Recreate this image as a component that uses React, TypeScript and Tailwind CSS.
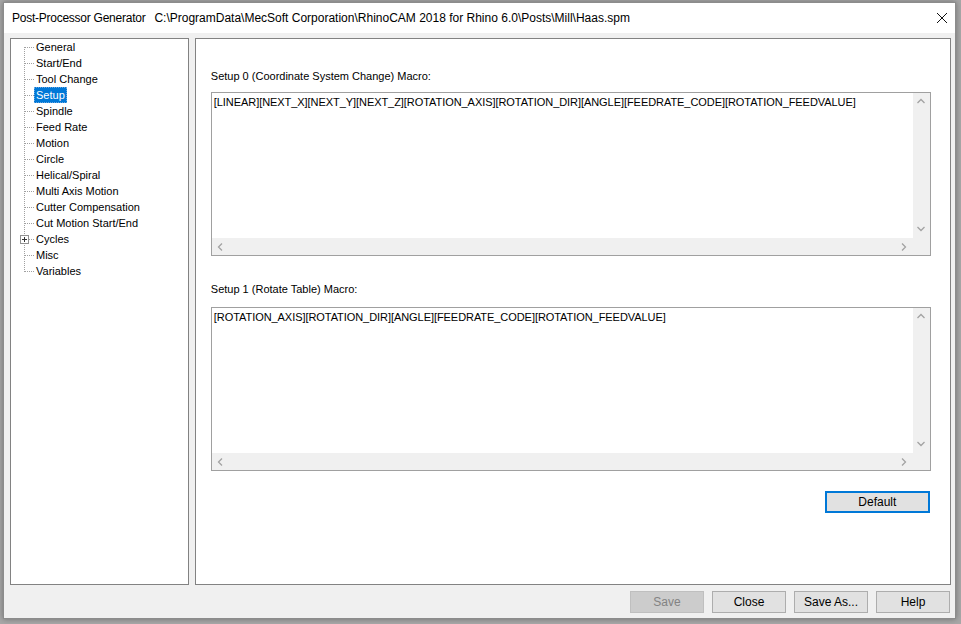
import React from "react";

const items = [
  "General",
  "Start/End",
  "Tool Change",
  "Setup",
  "Spindle",
  "Feed Rate",
  "Motion",
  "Circle",
  "Helical/Spiral",
  "Multi Axis Motion",
  "Cutter Compensation",
  "Cut Motion Start/End",
  "Cycles",
  "Misc",
  "Variables",
];

function TreeLines({ first, last, plus }: { first: boolean; last: boolean; plus: boolean }) {
  return (
    <svg width="23" height="16" viewBox="0 0 23 16" className="shrink-0" shapeRendering="crispEdges">
      <line
        x1="13.5"
        y1={first ? 8 : 0}
        x2="13.5"
        y2={last ? 9 : 16}
        stroke="#a0a0a0"
        strokeWidth="1"
        strokeDasharray="1 1"
      />
      <line x1={plus ? 18 : 14} y1="8.5" x2="23" y2="8.5" stroke="#a0a0a0" strokeWidth="1" strokeDasharray="1 1" />
      {plus && (
        <g>
          <rect x="9.5" y="4.5" width="8" height="8" fill="#ffffff" stroke="#919191" />
          <line x1="11" y1="8.5" x2="16" y2="8.5" stroke="#333" />
          <line x1="13.5" y1="6" x2="13.5" y2="11" stroke="#333" />
        </g>
      )}
    </svg>
  );
}

function Chevron({ dir }: { dir: "up" | "down" | "left" | "right" }) {
  const paths: Record<string, string> = {
    up: "M1.5 6 L5 2.5 L8.5 6",
    down: "M1.5 3 L5 6.5 L8.5 3",
    left: "M6 1.5 L2.5 5 L6 8.5",
    right: "M3 1.5 L6.5 5 L3 8.5",
  };
  return (
    <svg width="10" height="10" viewBox="0 0 10 10">
      <path d={paths[dir]} fill="none" stroke="#a3a3a3" strokeWidth="1.3" />
    </svg>
  );
}

function MacroBox({ text }: { text: string }) {
  return (
    <div className="w-[720px] h-[164px] border border-[#a0a0a0] bg-white flex flex-col">
      <div className="flex flex-1 min-h-0">
        <div className="flex-1 pl-[2px] pt-[3px] text-[11px] leading-[13px] tracking-[-0.06px] text-black whitespace-nowrap overflow-hidden">
          {text}
        </div>
        <div className="w-[17px] bg-[#f0f0f0] flex flex-col justify-between items-center py-[4px]">
          <Chevron dir="up" />
          <Chevron dir="down" />
        </div>
      </div>
      <div className="h-[17px] flex">
        <div className="flex-1 bg-[#f0f0f0] flex items-center justify-between px-[4px]">
          <Chevron dir="left" />
          <Chevron dir="right" />
        </div>
        <div className="w-[17px] bg-[#f0f0f0]" />
      </div>
    </div>
  );
}

function Btn({ label, disabled }: { label: string; disabled?: boolean }) {
  return (
    <div
      className={
        disabled
          ? "w-[74px] h-[22px] flex items-center justify-center border border-[#bfbfbf] bg-[#cccccc] text-[#838383] text-[12px]"
          : "w-[74px] h-[22px] flex items-center justify-center border border-[#adadad] bg-[#e1e1e1] text-black text-[12px]"
      }
    >
      {label}
    </div>
  );
}

export default function App() {
  return (
    <div className="w-[961px] h-[624px] bg-[#a8a8a8] overflow-hidden pt-[2px] pl-[3px] font-['Liberation_Sans',Arial,sans-serif]">
      <div className="w-[953px] h-[617px] border border-[#8c8c8c] bg-[#f0f0f0] flex flex-col shadow-[0_0_6px_rgba(0,0,0,0.35)]">
        {/* Title bar */}
        <div className="h-[30px] bg-white flex items-center pl-[8px] pr-[6px] shrink-0">
          <div className="flex gap-[9px] text-[12px] text-black flex-1">
            <span className="tracking-[-0.25px]">Post-Processor Generator</span>
            <span>C:\ProgramData\MecSoft Corporation\RhinoCAM 2018 for Rhino 6.0\Posts\Mill\Haas.spm</span>
          </div>
          <svg width="12" height="12" viewBox="0 0 12 12" className="mr-[1px] -mt-[1px]">
            <path d="M1 1 L11 11 M11 1 L1 11" stroke="#111" strokeWidth="1" />
          </svg>
        </div>

        {/* Body */}
        <div className="flex gap-[6px] pl-[6px] pr-[4px] pt-[5px] h-[552px] shrink-0">
          {/* Tree */}
          <div className="w-[179px] h-[547px] border border-[#828282] bg-white pt-0 text-[11px] text-black">
            {items.map((it, i) => (
              <div key={it} className="flex h-[16px] items-center">
                <TreeLines first={i === 0} last={i === items.length - 1} plus={it === "Cycles"} />
                <span
                  className={
                    it === "Setup"
                      ? "px-[2px] h-[16px] leading-[16px] bg-[#0078d7] text-white outline outline-1 outline-dotted outline-[#6aa8e0] -outline-offset-1"
                      : "px-[2px] h-[16px] leading-[16px]"
                  }
                >
                  {it}
                </span>
              </div>
            ))}
          </div>

          {/* Right panel */}
          <div className="w-[757px] h-[547px] border border-[#828282] bg-white pl-[15px] flex flex-col">
            <div className="mt-[31px] text-[11px] leading-[13px] text-black">
              Setup 0 (Coordinate System Change) Macro:
            </div>
            <div className="mt-[9px]">
              <MacroBox text="[LINEAR][NEXT_X][NEXT_Y][NEXT_Z][ROTATION_AXIS][ROTATION_DIR][ANGLE][FEEDRATE_CODE][ROTATION_FEEDVALUE]" />
            </div>
            <div className="mt-[27px] text-[11px] leading-[13px] text-black">Setup 1 (Rotate Table) Macro:</div>
            <div className="mt-[11px]">
              <MacroBox text="[ROTATION_AXIS][ROTATION_DIR][ANGLE][FEEDRATE_CODE][ROTATION_FEEDVALUE]" />
            </div>
            <div className="flex justify-end w-[719px] mt-[20px]">
              <div className="w-[105px] h-[22px] border-2 border-[#0078d7] bg-[#e1e1e1] flex items-center justify-center text-[12px] text-black">
                Default
              </div>
            </div>
          </div>
        </div>

        {/* Buttons */}
        <div className="flex justify-end gap-[8px] pr-[5px] pt-[6px]">
          <Btn label="Save" disabled />
          <Btn label="Close" />
          <Btn label="Save As..." />
          <Btn label="Help" />
        </div>
      </div>
    </div>
  );
}
